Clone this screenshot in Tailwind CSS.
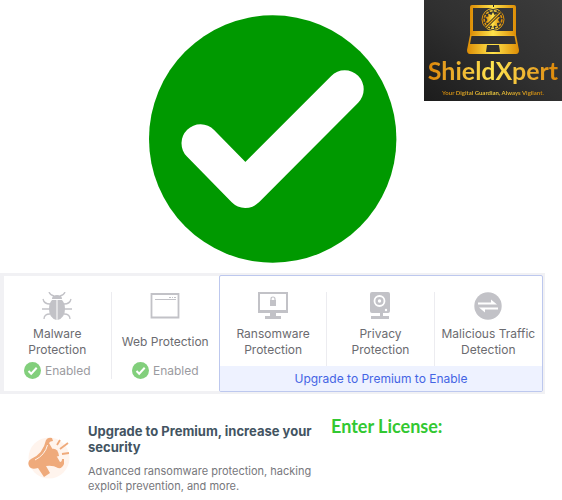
<!DOCTYPE html>
<html lang="en">
<head>
<meta charset="utf-8">
<meta name="viewport" content="width=device-width, initial-scale=1">
<title>ShieldXpert</title>
<script src="https://cdn.jsdelivr.net/npm/@tailwindcss/browser@4"></script>
</head>
<body class="bg-white font-['Inter',sans-serif]">
<header class="grid grid-cols-[149fr_248px_165fr] items-start">
  <div></div>
  <svg class="mt-[15px] mb-[10px] w-full" viewBox="0 0 248 248" role="img" aria-label="Protected">
    <circle cx="123.7" cy="124" r="123.7" fill="#009900"/>
    <path d="M51.5 128.3 96.3 174 195.7 74.3" fill="none" stroke="#fff" stroke-width="38" stroke-linecap="round" stroke-linejoin="round"/>
  </svg>
  <div class="flex w-[138px] flex-col items-center justify-self-end bg-linear-to-bl from-[#3c3c3c] via-[#303030] to-[#1c1c1c] pt-1 pb-[3px]">
    <svg class="h-[50px] w-[52px]" viewBox="0 0 52 50" aria-hidden="true">
      <defs><linearGradient id="gold"><stop offset="0" stop-color="#dc8c05"/><stop offset=".5" stop-color="#ffe44c"/><stop offset="1" stop-color="#dc8c05"/></linearGradient></defs>
      <path fill="url(#gold)" fill-rule="evenodd" d="M5 1h42q2 0 2 2v28H3V3q0-2 2-2ZM6 4v23h40V4Z"/>
      <path fill="url(#gold)" fill-rule="evenodd" d="M3 31h46l3 15q0 4-3 4H3q-3 0-3-4ZM4.500 32 3 40h46l-1.500-8ZM20 41l-1 7h14l-1-7Z"/>
      <path fill="#262626" d="M26 1h1v2h-1z"/>
      <g fill="none" stroke="url(#gold)">
        <circle cx="26" cy="15.500" r="11" stroke-width="1"/>
        <circle cx="26" cy="15.500" r="8.800" stroke-width="1.600" stroke-dasharray="3 1.200"/>
      </g>
      <path fill="url(#gold)" d="m26 8 1.500 3 3-1.500-.500 3 3 .500-2 3 2 2.500-3 .500.500 3.500-3.500-1L26 24l-1.500-2.500-3.500 1 .500-3.500-3-.500 2-2.500-2-3 3-.500-.500-3 3.500 1.500Z"/>
      <path d="m18 24 16-16" stroke="#292929" stroke-width="3"/><path d="m18.500 23.500 15-15" stroke="#e9aa18" stroke-width="1.200"/>
    </svg>
    <p class="bg-linear-to-r from-[#dc8604] via-[#ffe650] to-[#dc8604] bg-clip-text font-['Lato',sans-serif] text-[25px] leading-8 font-bold text-transparent">ShieldXpert</p>
    <p class="mt-[2px] bg-linear-to-r from-[#c98205] via-[#f4d040] to-[#c98205] bg-clip-text font-['Lato',sans-serif] text-[6px] leading-[10px] font-bold whitespace-nowrap text-transparent">Your Digital Guardian, Always Vigilant.</p>
  </div>
</header>

<main>
  <section class="mr-[17px] grid grid-cols-[215fr_324fr] bg-[#f1f1f4] py-[2px] pr-[2px] pl-1 text-xs leading-4 text-[#6b6b70]">
    <div class="my-px grid grid-cols-2 bg-white pt-4 pb-3 text-center">
      <div class="flex flex-col items-center border-r border-[#ececf0]">
        <svg class="h-[28px] w-[30px]" viewBox="0 0 30 28" aria-hidden="true">
          <g fill="none" stroke="#c2c2c7" stroke-width="1.300"><path d="M7 0q1 3 5 4M23 0q-1 3-5 4M1 7q1 5 7 5M29 7q-1 5-7 5M0 17h8M30 17h-8M2 27q0-5 6-5M28 27q0-5-6-5"/></g>
          <path fill="#c2c2c7" d="M10 7q0-4 5-4t5 4ZM14.500 8v20Q7 26 7 17q0-6 3-9ZM15.500 8v20Q23 26 23 17q0-6-3-9Z"/>
        </svg>
        <h2 class="mt-[6px] flex h-8 items-center">Malware<br>Protection</h2>
        <p class="mt-1 flex items-center gap-1 text-[#9b9ba0]"><svg class="size-[17px]" viewBox="0 0 17 17" aria-hidden="true"><circle cx="8.500" cy="8.500" r="8.500" fill="#82cf7c"/><path d="m4.500 9 2.700 2.700 5.500-6" fill="none" stroke="#fff" stroke-width="2"/></svg>Enabled</p>
      </div>
      <div class="flex flex-col items-center">
        <svg class="h-[28px] w-[30px]" viewBox="0 0 30 28" aria-hidden="true"><path d="M1.500 2h27v23.500h-27Z" fill="none" stroke="#c2c2c7" stroke-width="1.800"/><path d="M5 7.500h21M19 5.500h2m1 0h1m1 0h2" stroke="#c2c2c7"/></svg>
        <h2 class="mt-[6px] flex h-8 items-center">Web Protection</h2>
        <p class="mt-1 flex items-center gap-1 text-[#9b9ba0]"><svg class="size-[17px]" viewBox="0 0 17 17" aria-hidden="true"><circle cx="8.500" cy="8.500" r="8.500" fill="#82cf7c"/><path d="m4.500 9 2.700 2.700 5.500-6" fill="none" stroke="#fff" stroke-width="2"/></svg>Enabled</p>
      </div>
    </div>
    <div class="flex flex-col overflow-hidden rounded-xs border border-[#bdc8ee] bg-white">
      <div class="grid grow grid-cols-3 pt-4 text-center">
        <div class="flex flex-col items-center border-r border-[#ececf0]">
          <svg class="h-[28px] w-[30px]" viewBox="0 0 30 28" aria-hidden="true"><path fill="#c2c2c7" fill-rule="evenodd" d="M0 0h30v21H18v3h5v3H7v-3h5v-3H0ZM2 2v16h26V2Z"/><path fill="#c2c2c7" d="M12 8h6v6h-6z"/><path d="M13 9V7q0-2 2-2t2 2v2" fill="none" stroke="#c2c2c7" stroke-width="1.200"/></svg>
          <h2 class="mt-[6px]">Ransomware<br>Protection</h2>
        </div>
        <div class="flex flex-col items-center border-r border-[#ececf0]">
          <svg class="h-[28px] w-[30px]" viewBox="0 0 30 28" aria-hidden="true"><path fill="#c2c2c7" d="M7 0h16q2 0 2 2v17q0 2-2 2h-5v3h6v3H6v-3h9v-3H7q-2 0-2-2V2q0-2 2-2Z"/><circle cx="14.500" cy="9" r="5" fill="none" stroke="#fff" stroke-width="1.800"/><circle cx="14.500" cy="9" r="1.700" fill="#fff"/><circle cx="21" cy="18" r="1.200" fill="#fff"/></svg>
          <h2 class="mt-[6px]">Privacy<br>Protection</h2>
        </div>
        <div class="flex flex-col items-center">
          <svg class="h-[28px] w-[30px]" viewBox="0 0 30 28" aria-hidden="true"><circle cx="15" cy="14" r="13.700" fill="#c2c2c7"/><path d="M5 12.500h19l-6-5v3H5ZM25 15.500H6l6 5v-3h13Z" fill="#fff"/></svg>
          <h2 class="mt-[6px] whitespace-nowrap">Malicious Traffic<br>Detection</h2>
        </div>
      </div>
      <button type="button" class="h-[25px] bg-[#eef2ff] text-center text-[#4464e4]">Upgrade to Premium to Enable</button>
    </div>
  </section>

  <div class="grid grid-cols-[minmax(0,331fr)_minmax(0,231fr)] items-start">
    <section class="flex pt-[29px] pl-7">
      <svg class="mt-[14px] h-[42px] w-[42px] shrink-0" viewBox="0 0 42 42" aria-hidden="true">
        <circle cx="21" cy="21" r="20.500" fill="#fff4ed"/>
        <path fill="#efaa7b" d="M18 3q2-3 6-2l1 3q-3 0-4 2l11 19q2 0 2-3h2v5q-2 5-6 4-5-3-12-2l4 7-6 4-6-9q-7 2-9-2-2-5 2-7Q15 17 18 3Z"/>
        <path d="M7 23Q17 18 19.500 8" fill="none" stroke="#fff4ed"/>
        <path fill="#efaa7b" d="M23 12q7-2 8 7l-4 1Z"/>
        <path d="m29 8 3-5M32 12l8-6M34 17l7-1" fill="none" stroke="#efaa7b" stroke-width="1.800"/>
      </svg>
      <div class="ml-[18px]">
        <h2 class="text-[13px] leading-4 font-bold whitespace-nowrap text-[#435462]">Upgrade to Premium, increase your<br>security</h2>
        <p class="mt-[9px] text-[11px] leading-[15px] whitespace-nowrap text-[#77777c]">Advanced ransomware protection, hacking<br>exploit prevention, and more.</p>
      </div>
    </section>
    <div class="flex items-center pt-5">
      <label for="license" class="font-['Lato',sans-serif] text-lg leading-6 font-bold whitespace-nowrap text-[#32c832]">Enter License:</label>
      <input id="license" type="text" class="ml-2 h-6 min-w-0 flex-1 outline-none">
    </div>
  </div>
</main>
</body>
</html>
